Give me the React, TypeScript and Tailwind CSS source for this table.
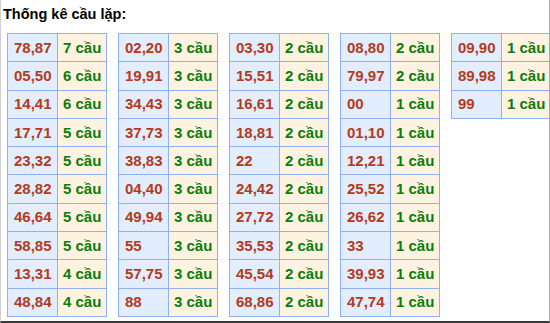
import React from "react";

const cols: [string, string][][] = [
  [
    ["78,87", "7 cầu"],
    ["05,50", "6 cầu"],
    ["14,41", "6 cầu"],
    ["17,71", "5 cầu"],
    ["23,32", "5 cầu"],
    ["28,82", "5 cầu"],
    ["46,64", "5 cầu"],
    ["58,85", "5 cầu"],
    ["13,31", "4 cầu"],
    ["48,84", "4 cầu"],
  ],
  [
    ["02,20", "3 cầu"],
    ["19,91", "3 cầu"],
    ["34,43", "3 cầu"],
    ["37,73", "3 cầu"],
    ["38,83", "3 cầu"],
    ["04,40", "3 cầu"],
    ["49,94", "3 cầu"],
    ["55", "3 cầu"],
    ["57,75", "3 cầu"],
    ["88", "3 cầu"],
  ],
  [
    ["03,30", "2 cầu"],
    ["15,51", "2 cầu"],
    ["16,61", "2 cầu"],
    ["18,81", "2 cầu"],
    ["22", "2 cầu"],
    ["24,42", "2 cầu"],
    ["27,72", "2 cầu"],
    ["35,53", "2 cầu"],
    ["45,54", "2 cầu"],
    ["68,86", "2 cầu"],
  ],
  [
    ["08,80", "2 cầu"],
    ["79,97", "2 cầu"],
    ["00", "1 cầu"],
    ["01,10", "1 cầu"],
    ["12,21", "1 cầu"],
    ["25,52", "1 cầu"],
    ["26,62", "1 cầu"],
    ["33", "1 cầu"],
    ["39,93", "1 cầu"],
    ["47,74", "1 cầu"],
  ],
  [
    ["09,90", "1 cầu"],
    ["89,98", "1 cầu"],
    ["99", "1 cầu"],
  ],
];

export default function App() {
  return (
    <div
      className="w-[550px] h-[323px] bg-white overflow-hidden border-l border-l-[#d0d0d0] border-r border-r-[#a8a8a8] border-b-2 border-b-[#3a3a3a] box-border"
      style={{ fontFamily: '"Liberation Sans", Arial, sans-serif' }}
    >
      <div className="pl-[2px] pt-[4px] h-[33px] text-[14.5px] leading-[20px] font-bold text-black">
        Thống kê cầu lặp:
      </div>
      <div className="flex gap-[11px] pl-[6px] items-start">
        {cols.map((col, i) => (
          <table
            key={i}
            className="border-collapse shrink-0 w-[100px] text-[15px] font-bold"
          >
            <tbody>
              {col.map(([n, c], j) => (
                <tr key={j} className="h-[28.3px]">
                  <td className="border border-[#8fb0f2] bg-[#e2edfd] text-[#b43a1c] pl-[6px] w-[50px] p-0 leading-[16px]">
                    {n}
                  </td>
                  <td className="border border-[#8fb0f2] bg-[#fef3e1] text-[#0b7d0b] pl-[5px] p-0 leading-[16px]">
                    {c}
                  </td>
                </tr>
              ))}
            </tbody>
          </table>
        ))}
      </div>
    </div>
  );
}
